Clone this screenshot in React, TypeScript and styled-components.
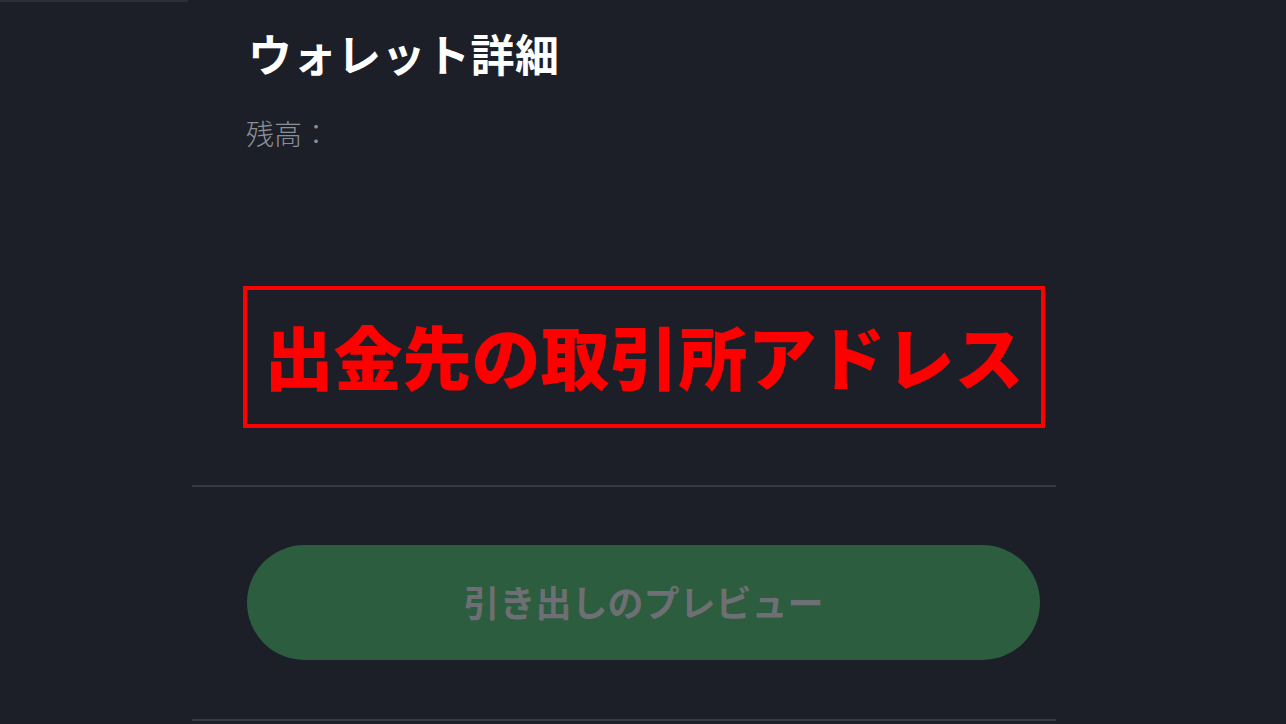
import React from 'react'
import styled, { createGlobalStyle } from 'styled-components'

const GlobalStyle = createGlobalStyle`
  html, body {
    margin: 0;
    padding: 0;
    background: #1c1f28;
  }

  body {
    font-family: "Noto Sans CJK JP", "Noto Sans", sans-serif;
  }
`

const Page = styled.div`
  position: relative;
  width: 1286px;
  height: 724px;
  overflow: hidden;

  background: #1c1f28;
`

const TopEdge = styled.div`
  display: flex;
  height: 2px;
`

const EdgePiece = styled.div<{ $width: number, $shade: string }>`
  width: ${({ $width }) => $width}px;
  flex: ${({ $width }) => ($width ? 'none' : '1')};

  background: ${({ $shade }) => $shade};
`

const Panel = styled.div`
  display: flex;
  flex-direction: column;
  width: 910px;
  margin: 0 auto;
`

const Content = styled.div`
  display: flex;
  flex-direction: column;
  padding: 0 55px 0 55px;
`

const Title = styled.h1`
  margin: 20px 0 0 5px;

  color: #ffffff;
  font-size: 44px;
  font-weight: 700;
  line-height: 62px;
  letter-spacing: 0.5px;
`

const BalanceLabel = styled.div`
  margin: 29px 0 0 3px;

  color: #8b9098;
  font-size: 28px;
  font-weight: 300;
  line-height: 40px;
`

const Callout = styled.div`
  display: flex;
  align-items: center;
  justify-content: center;
  height: 142px;
  box-sizing: border-box;
  margin: 133px -2px 0 0;

  border: 4px solid #ff0000;
`

const CalloutText = styled.span`
  margin-bottom: 4px;

  color: #ff0000;
  font-size: 69px;
  font-weight: 900;
  line-height: 1;
`

const Divider = styled.hr<{ $top: number }>`
  width: 864px;
  height: 2px;
  margin: ${({ $top }) => $top}px 0 0 4px;

  background: #363a43;
  border: none;
`

const PreviewButton = styled.button`
  display: flex;
  align-items: center;
  justify-content: center;
  height: 115px;
  margin: 58px 3px 0 4px;
  padding-bottom: 4px;

  color: #6e6f74;
  font-family: "Noto Sans CJK JP", "Noto Sans", sans-serif;
  font-size: 36px;
  font-weight: 700;

  background: #2c5d3e;
  border: none;
  border-radius: 58px;
`

const App: React.FC = () => (
  <>
    <GlobalStyle />
    <Page>
      <TopEdge>
        <EdgePiece $width={188} $shade="#2b2f37" />
        <EdgePiece $width={0} $shade="#1c1f28" />
      </TopEdge>
      <Panel>
        <Content>
          <Title>ウォレット詳細</Title>
          <BalanceLabel>残高：</BalanceLabel>
          <Callout>
            <CalloutText>出金先の取引所アドレス</CalloutText>
          </Callout>
        </Content>
        <Divider $top={57} />
        <Content>
          <PreviewButton>引き出しのプレビュー</PreviewButton>
        </Content>
        <Divider $top={59} />
      </Panel>
    </Page>
  </>
)

export default App
